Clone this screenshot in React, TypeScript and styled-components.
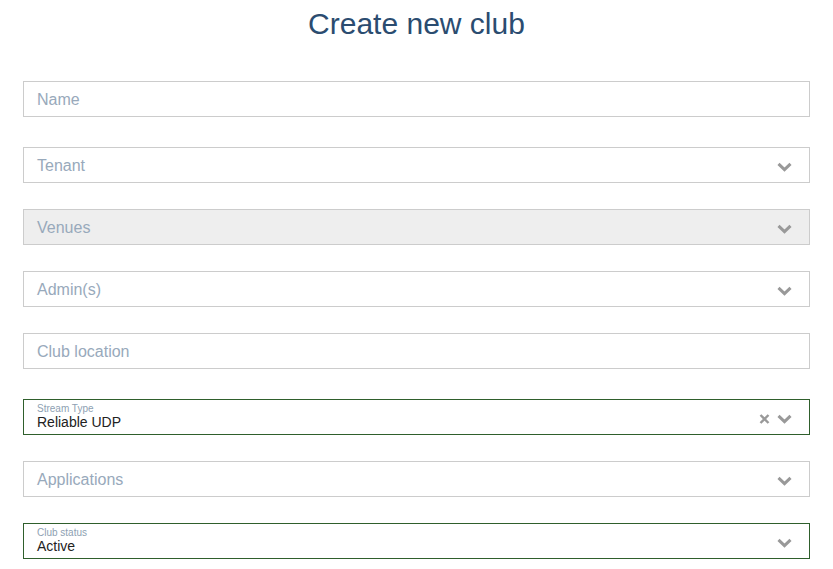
import React from 'react';
import styled, { createGlobalStyle } from 'styled-components';

const GlobalStyle = createGlobalStyle`
  html, body {
    margin: 0;
    padding: 0;
    background: #ffffff;
    font-family: "Liberation Sans", Arial, sans-serif;
  }
`;

const Page = styled.div`
  width: 833px;
  padding: 0 23px 0 23px;
  box-sizing: border-box;
`;

const Title = styled.h1`
  margin: 0;
  padding-top: 6px;
  height: 75px;
  box-sizing: border-box;
  text-align: center;
  font-size: 30px;
  font-weight: 400;
  color: #2b4c70;
  line-height: 36px;
`;

const Form = styled.div`
  display: flex;
  flex-direction: column;
`;

const Field = styled.div<{ $disabled?: boolean; $filled?: boolean; $gap: number }>`
  display: flex;
  align-items: center;
  height: 36px;
  box-sizing: border-box;
  margin-top: ${p => p.$gap}px;
  padding: 0 13px;
  border: 1px solid ${p => (p.$filled ? '#2f5f2c' : '#cccccc')};
  background: ${p => (p.$disabled ? '#eeeeee' : '#ffffff')};
`;

const Body = styled.div`
  flex: 1;
  display: flex;
  flex-direction: column;
  justify-content: center;
`;

const Placeholder = styled.span`
  font-size: 16px;
  color: #98a9bb;
  padding-top: 2px;
`;

const SmallLabel = styled.span`
  font-size: 10px;
  line-height: 10px;
  color: #8e9fb2;
`;

const Value = styled.span`
  font-size: 14px;
  line-height: 16px;
  color: #222222;
`;

const Icons = styled.div`
  display: flex;
  align-items: center;
  gap: 7px;
  margin-right: 4px;
  padding-top: 3px;
`;

const Chevron = () => (
  <svg width="15" height="10" viewBox="0 0 15 10">
    <path d="M1.5 1.8 L7.5 7.6 L13.5 1.8" fill="none" stroke="#999999" strokeWidth="3" />
  </svg>
);

const Cross = () => (
  <svg width="11" height="10" viewBox="0 0 11 10">
    <path d="M1.5 1 L9.5 9 M9.5 1 L1.5 9" fill="none" stroke="#999999" strokeWidth="2.4" />
  </svg>
);

type Item = {
  gap: number;
  placeholder?: string;
  label?: string;
  value?: string;
  select?: boolean;
  clear?: boolean;
  disabled?: boolean;
};

const items: Item[] = [
  { gap: 6, placeholder: 'Name' },
  { gap: 30, placeholder: 'Tenant', select: true },
  { gap: 26, placeholder: 'Venues', select: true, disabled: true },
  { gap: 26, placeholder: 'Admin(s)', select: true },
  { gap: 26, placeholder: 'Club location' },
  { gap: 30, label: 'Stream Type', value: 'Reliable UDP', select: true, clear: true },
  { gap: 26, placeholder: 'Applications', select: true },
  { gap: 26, label: 'Club status', value: 'Active', select: true },
];

const App: React.FC = () => (
  <>
    <GlobalStyle />
    <Page>
      <Title>Create new club</Title>
      <Form>
        {items.map((it, i) => (
          <Field key={i} $gap={it.gap} $disabled={it.disabled} $filled={!!it.value}>
            <Body>
              {it.value ? (
                <>
                  <SmallLabel>{it.label}</SmallLabel>
                  <Value>{it.value}</Value>
                </>
              ) : (
                <Placeholder>{it.placeholder}</Placeholder>
              )}
            </Body>
            {it.select && (
              <Icons>
                {it.clear && <Cross />}
                <Chevron />
              </Icons>
            )}
          </Field>
        ))}
      </Form>
    </Page>
  </>
);

export default App;
